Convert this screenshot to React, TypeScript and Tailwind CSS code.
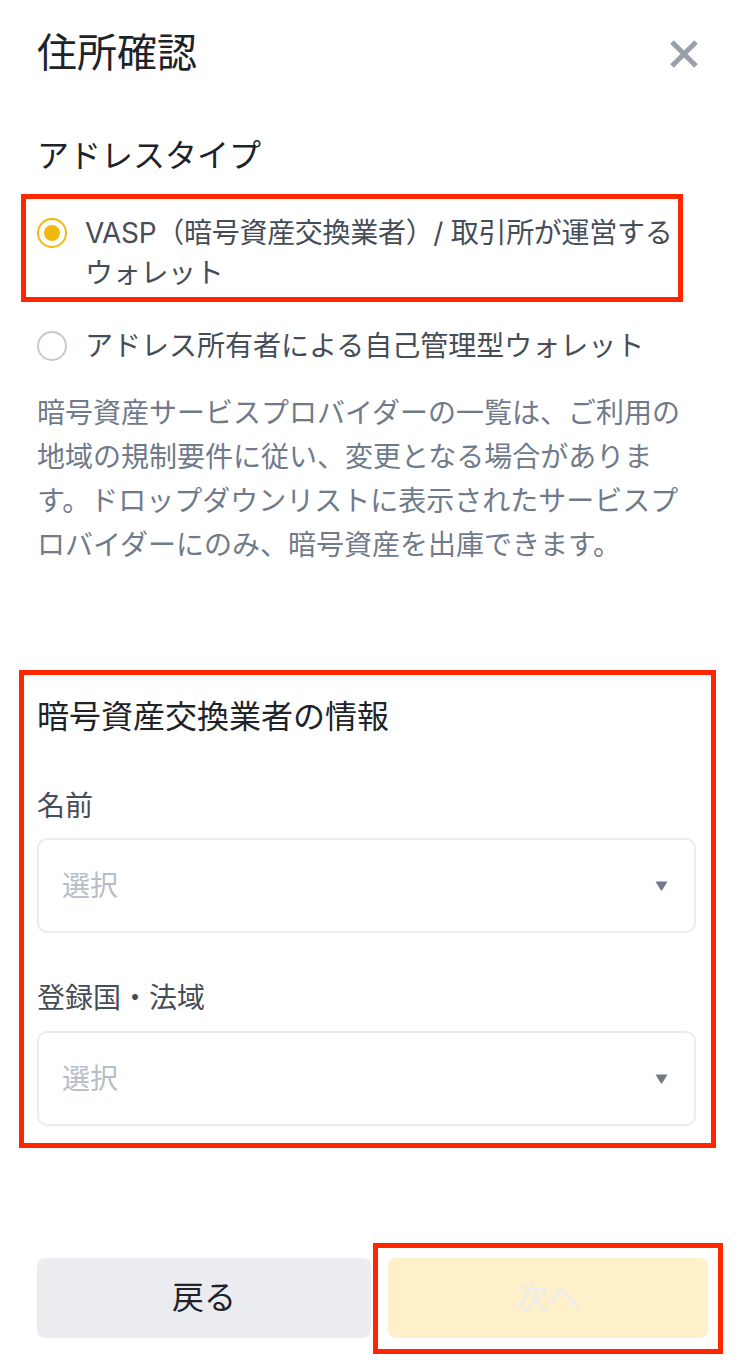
const font = { fontFamily: 'Inter, "Noto Sans CJK JP", sans-serif' }

function Radio({ checked }: { checked: boolean }) {
  return (
    <div
      className={
        checked
          ? "w-[30px] h-[30px] shrink-0 rounded-full border-2 border-[#f0b90b] flex items-center justify-center mt-[5px]"
          : "w-[30px] h-[30px] shrink-0 rounded-full border-2 border-[#c5cad1] mt-[5px]"
      }
    >
      {checked && <div className="w-[16px] h-[16px] rounded-full bg-[#f0b90b]"></div>}
    </div>
  )
}

function SelectBox() {
  return (
    <div className="h-[95px] w-full border-2 border-[#eaecef] rounded-[10px] flex items-center justify-between pl-[23px] pr-[26px]">
      <span className="text-[28px] leading-[36px] text-[#b7bdc6]">選択</span>
      <svg width="13" height="10" viewBox="0 0 13 10">
        <path d="M0.5 0.5 H12.5 L7.3 9 Q6.5 10 5.7 9 Z" fill="#707a8a" />
      </svg>
    </div>
  )
}

function Annotation({ className }: { className: string }) {
  return <div className={"absolute border-[5px] border-[#ff2600] pointer-events-none " + className}></div>
}

export default function App() {
  return (
    <div className="min-h-screen bg-white pl-[37px]" style={font}>
      {/* header */}
      <div className="w-[662px] flex items-center justify-between pt-[29px]">
        <h1 className="text-[40px] leading-[48px] text-[#1e2329] font-normal">住所確認</h1>
        <svg width="30" height="28" viewBox="0 0 30 28" className="mt-[2px]">
          <path d="M3 2 L27 26 M27 2 L3 26" stroke="#9aa0a9" strokeWidth="5" />
        </svg>
      </div>

      {/* address type */}
      <div className="w-[659px]">
        <h2 className="mt-[59px] text-[32px] leading-[40px] text-[#1e2329]">アドレスタイプ</h2>

        <div className="relative mt-[37px] flex items-start gap-[18px]">
          <Annotation className="top-[-19px] bottom-[-9px] left-[-16px] right-[13px]" />
          <Radio checked={true} />
          <div className="text-[28px] leading-[40px] text-[#474d57] tracking-[-0.3px]">
            VASP（暗号資産交換業者）/ 取引所が運営する
            <br />
            ウォレット
          </div>
        </div>

        <div className="mt-[33px] flex items-start gap-[18px]">
          <Radio checked={false} />
          <div className="text-[28px] leading-[40px] text-[#474d57]">アドレス所有者による自己管理型ウォレット</div>
        </div>

        <p className="mt-[25px] text-[28px] leading-[44px] text-[#707a8a]">
          暗号資産サービスプロバイダーの一覧は、ご利用の地域の規制要件に従い、変更となる場合があります。ドロップダウンリストに表示されたサービスプロバイダーにのみ、暗号資産を出庫できます。
        </p>

        {/* exchange info */}
        <div className="relative mt-[130px]">
          <Annotation className="top-[-27px] bottom-[-22px] left-[-18px] right-[-20px]" />
          <h2 className="text-[32px] leading-[40px] text-[#1e2329]">暗号資産交換業者の情報</h2>

          <div className="mt-[51px] text-[28px] leading-[36px] text-[#474d57]">名前</div>
          <div className="mt-[14px]">
            <SelectBox />
          </div>

          <div className="mt-[47px] text-[28px] leading-[36px] text-[#474d57]">登録国・法域</div>
          <div className="mt-[15px]">
            <SelectBox />
          </div>
        </div>
      </div>

      {/* buttons */}
      <div className="mt-[132px] flex gap-[17px] pb-[28px]">
        <button className="w-[334px] h-[80px] rounded-[8px] bg-[#eaecef] text-[32px] text-[#1e2329]">戻る</button>
        <div className="relative">
          <Annotation className="top-[-15px] bottom-[-16px] left-[-15px] right-[-15px]" />
          <button className="w-[320px] h-[80px] rounded-[8px] bg-[#fef0c8] text-[32px] text-[#eaecef]">次へ</button>
        </div>
      </div>
    </div>
  )
}
